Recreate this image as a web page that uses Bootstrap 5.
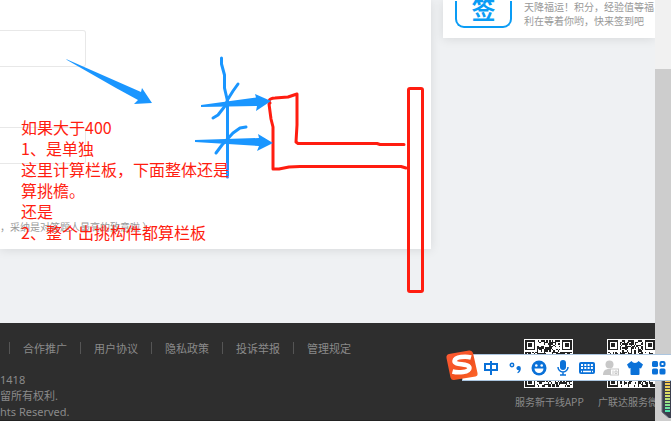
<!DOCTYPE html>
<html lang="zh-CN">
<head>
<meta charset="utf-8">
<meta name="viewport" content="width=device-width, initial-scale=1">
<title>服务新干线</title>
<link href="https://cdn.jsdelivr.net/npm/bootstrap@5.3.0/dist/css/bootstrap.min.css" rel="stylesheet">
<style>
  body { font-family: "Noto Sans", "Noto Sans CJK SC", sans-serif; background: #eff1f3; font-size: 12px; }
  .page-pane { min-width: 0; }
  .scroll-track { width: 16px; background: #f1f1f1; padding-top: 69px; }
  .scroll-thumb { background: #cdcdcd; }
  .panel { background: #fff; box-shadow: 0 1px 10px rgba(0,0,0,.1); }
  .columns { gap: 12px; padding-bottom: 74px; }
  .answer-panel { padding: 30px 0 14px; }
  .field { width: 86px; height: 37px; border: 1px solid #e8e8e8; border-left: 0; border-radius: 0 3px 3px 0; outline: 0; }
  .field + .field { margin-top: 60px; }
  .hint { font-size: 10px; line-height: 16px; color: #999; margin-top: 55px; font-family: "Noto Sans CJK SC", sans-serif; }
  .side-col { width: 212px; }
  .sign-card { gap: 12px; padding: 0 0 10px 12px; }
  .sign-box { width: 57px; height: 27px; border: 2px solid #0a9cf5; border-top: 0; border-radius: 0 0 9px 9px; background: #fff; color: #0a9cf5; font: 700 24px/24px "Noto Sans CJK SC", sans-serif; padding: 0 0 5px; }
  .sign-text { font: 10px/14px "Noto Sans CJK SC", sans-serif; color: #999; width: 132px; }
  .site-footer { background: #2e2e2e; color: #8a8a8a; border-bottom: 1px solid #222; }
  .foot-links { font: 11px/16px "Noto Sans CJK SC", sans-serif; padding: 19px 0 18px 9px; }
  .foot-links a { color: #8a8a8a; text-decoration: none; border-left: 1px solid #555; padding: 0 13px; line-height: 12px; white-space: nowrap; }
  .legal { font-size: 11px; line-height: 16px; }
  .qr-list { gap: 16px; padding: 16px 0 0; width: 140px; }
  .qr-item { width: 67px; font: 10px/16px "Noto Sans CJK SC", sans-serif; white-space: nowrap; }
  .qr-item svg { width: 49px; height: 49px; background: #fff; margin-bottom: 6px; }
  .drawing { left: 0; top: 0; pointer-events: none; }
  .note { left: 21px; top: 117px; color: #ff1d10; font: 16px/21px "Noto Sans CJK SC", sans-serif; width: 210px; }
  .ime { right: 0; top: 354px; height: 27px; background: #fff; border: 1px solid #abc5df; border-right: 0; padding-left: 16px; }
  .ime button { width: 24px; height: 25px; border: 0; padding: 0; background: none; color: #0a71d8; }
  .ime svg { display: block; margin: auto; }
  .ime-logo { left: 445px; top: 348px; }
  .meter { right: 0; top: 380px; }
</style>
<script src="https://cdn.jsdelivr.net/npm/bootstrap@5.3.0/dist/js/bootstrap.bundle.min.js"></script>
</head>
<body class="position-relative min-vh-100 overflow-hidden">
<div class="d-flex min-vh-100">
  <div class="page-pane d-flex flex-column flex-grow-1 overflow-hidden">
    <main class="columns d-flex align-items-start">
      <section class="panel answer-panel flex-grow-1">
        <input class="field d-block" aria-label="标题">
        <input class="field d-block" aria-label="悬赏">
        <p class="hint mb-0">，采纳是对答题人最高的致意啦 ）</p>
      </section>
      <aside class="side-col flex-shrink-0">
        <div class="panel sign-card d-flex align-items-end">
          <button class="sign-box flex-shrink-0 d-flex align-items-end justify-content-center" type="button">签</button>
          <p class="sign-text mb-0">天降福运！积分，经验值等福利在等着你哟，快来签到吧</p>
        </div>
      </aside>
    </main>
    <footer class="site-footer flex-grow-1 d-flex justify-content-between">
      <div>
        <nav class="foot-links d-flex align-items-center" aria-label="页脚">
          <a href="#">合作推广</a><a href="#">用户协议</a><a href="#">隐私政策</a><a href="#">投诉举报</a><a href="#">管理规定</a>
        </nav>
        <div class="legal">1418<br>留所有权利.<br>hts Reserved.</div>
      </div>
      <div class="qr-list d-flex flex-shrink-0">
        <div class="qr-item flex-shrink-0 text-center"><svg class="qr" data-seed="17" viewBox="-1 -1 35 35" shape-rendering="crispEdges"></svg><div>服务新干线APP</div></div>
        <div class="qr-item flex-shrink-0 text-center"><svg class="qr" data-seed="91" viewBox="-1 -1 35 35" shape-rendering="crispEdges"></svg><div>广联达服务微信</div></div>
      </div>
    </footer>
  </div>
  <div class="scroll-track d-flex flex-shrink-0"><div class="scroll-thumb w-100"></div></div>
</div>

<svg class="drawing position-absolute" width="440" height="300" viewBox="0 0 440 300" fill="none" stroke-linecap="round" stroke-linejoin="round" aria-hidden="true">
  <g stroke="#ff1d10" stroke-width="3">
    <path d="M270 103C267 99 273 98 275 98L288 97L297 94V125L296 142L298 143.500H377L380 144.500H404"/>
    <path d="M269 104L271 119L273 127V169H279L289 167L300 166.500H401L406 168"/>
    <rect x="408.500" y="88.500" width="14" height="203" rx="1.500"/>
  </g>
  <g stroke="#1a96ff" stroke-width="3">
    <path d="M221.500 58V64L224.500 75V88L227.500 101V177"/>
    <path d="M238 84L233 91L228 99L225 106L218 115L213 118"/>
    <path d="M246 127L240 128L233 133L222 145L216 153"/>
  </g>
  <g fill="#1a96ff">
    <path d="M66 59L141 92L142 88L152 103L134 104L138 100L116 88L67 60Z"/>
    <path d="M201 105L256 97.500L255 94L271 101L256 111L257 106L201 107Z"/>
    <path d="M195 140L259 138L258 134L273 143L257 151L259 146L195 142Z"/>
  </g>
</svg>
<div class="note position-absolute">如果大于400<br>1、是单独<br>这里计算栏板，下面整体还是算挑檐。<br>还是<br>2、整个出挑构件都算栏板</div>

<svg class="meter position-absolute" width="10" height="38" viewBox="0 0 10 38" aria-hidden="true">
  <defs><linearGradient id="lv" x1="0" y1="0" x2="0" y2="1"><stop stop-color="#ffc24a"/><stop offset=".5" stop-color="#d3e26b"/><stop offset="1" stop-color="#4be3b0"/></linearGradient></defs>
  <path d="M1 0H10V38H8L1 32Z" fill="#3b3f4e"/>
  <path d="M1 0V32L8 38" fill="none" stroke="#6a6e7c"/>
  <path d="M4 0h5v2h-5zM4 3h5v2h-5zM4 6h5v2h-5zM4 9h5v2h-5zM4 12h5v2h-5zM4 15h5v2h-5zM4 18h5v2h-5zM4 21h5v2h-5zM4 24h5v2h-5zM4 27h5v2h-5zM4 30h5v2h-5z" fill="url(#lv)"/>
</svg>
<div class="ime position-absolute d-flex align-items-center" role="toolbar" aria-label="输入法">
  <button type="button" aria-label="中文"><svg width="16" height="16" viewBox="0 0 16 16" fill="none" stroke="currentColor" stroke-width="2"><path d="M2 4H14V10H2ZM8 1V15"/></svg></button>
  <button type="button" aria-label="标点"><svg width="16" height="16" viewBox="0 0 16 16"><circle cx="5" cy="5" r="1.700" fill="none" stroke="currentColor" stroke-width="1.500"/><path d="M9.500 7.500a2.200 2.200 0 0 1 4.300 .5c.2 2.500-1 4.400-3 5.200l-.5-.8c1-.7 1.500-1.500 1.500-2.400A2 2 0 0 1 9.500 7.500" fill="currentColor"/></svg></button>
  <button type="button" aria-label="表情"><svg width="16" height="16" viewBox="0 0 16 16"><circle cx="8" cy="8" r="7.500" fill="currentColor"/><circle cx="5.300" cy="5.500" r="1.300" fill="#fff"/><circle cx="10.700" cy="5.500" r="1.300" fill="#fff"/><path d="M3.500 8.500h9a4.500 4.500 0 0 1-9 0" fill="#fff"/></svg></button>
  <button type="button" aria-label="语音"><svg width="16" height="16" viewBox="0 0 16 16"><rect x="5" y="0" width="6" height="10" rx="3" fill="currentColor"/><path d="M3 7a5 5 0 0 0 10 0M8 12v3M5 15h6" fill="none" stroke="currentColor" stroke-width="1.500"/></svg></button>
  <button type="button" aria-label="键盘"><svg width="16" height="16" viewBox="0 0 16 16"><rect x="0" y="2" width="16" height="12" rx="2" fill="currentColor"/><path d="M2 5h12M2 8h12" stroke="#fff" stroke-width="2" stroke-dasharray="2 1.300"/><path d="M4 11.500h8M2 11.500h1M13 11.500h1" stroke="#fff" stroke-width="1.500"/></svg></button>
  <button type="button" aria-label="账户"><svg width="16" height="16" viewBox="0 0 16 16"><g fill="#c8c8c8"><circle cx="6.500" cy="4.500" r="4"/><path d="M0 15c0-4 2-6 6-6h9v6z"/></g><rect x="7.500" y="9" width="8" height="6" fill="#fff" stroke="#c8c8c8"/><path d="M10 10.500V14M12 11h2v2.500h-2z" fill="none" stroke="#c8c8c8"/></svg></button>
  <button type="button" aria-label="皮肤"><svg width="16" height="16" viewBox="0 0 16 16"><path d="M4.500 1C6 3.500 10 3.500 11.500 1L16 4.500L14 8.500L12.500 8V14q0 1-1 1H4.500q-1 0-1-1V8L2 8.500L0 4.500Z" fill="currentColor"/></svg></button>
  <button type="button" aria-label="工具箱"><svg width="14" height="14" viewBox="0 0 14 14"><g fill="currentColor"><rect width="6" height="6" rx="1.500"/><rect y="7.500" width="6" height="6" rx="1.500"/><rect x="7.500" y="7.500" width="6" height="6" rx="1.500"/></g><rect x="8.500" y="1" width="4" height="4" rx="1" fill="none" stroke="currentColor" stroke-width="2"/></svg></button>
</div>
<svg class="ime-logo position-absolute" width="34" height="34" viewBox="0 0 34 34" aria-hidden="true">
  <defs><linearGradient id="sg" x1="0" y1="0" x2="1" y2="1"><stop stop-color="#ff5c36"/><stop offset=".6" stop-color="#f2511f"/><stop offset="1" stop-color="#ff6a2a"/></linearGradient></defs>
  <path d="M4 6L24 2.500Q27 2 28 5L32.500 25Q33 28 30.500 28.500L9 32Q6.500 32.500 5.500 29.500L1.500 10Q1 6.800 4 6Z" fill="url(#sg)"/>
  <path d="M26 9.500C21 8 10 8.500 9.500 13C9 17.500 24.500 15 24.500 20C24.500 24.500 13 25 7.500 23.500" fill="none" stroke="#fff" stroke-width="4.500"/>
</svg>
<script>
  // Fill each code with three finder squares and seeded modules.
  document.querySelectorAll('.qr').forEach(function (svg) {
    var n = 33, s = +svg.dataset.seed, d = '';
    function corner(x, y) {
      return (x < 8 && y < 8) || (x > n - 9 && y < 8) || (x < 8 && y > n - 9);
    }
    for (var y = 0; y < n; y++) for (var x = 0; x < n; x++) {
      s = (s * 16807) % 2147483647;
      if (!corner(x, y) && (s >> 8) % 100 < 53) d += 'M' + x + ' ' + y + 'h1v1h-1z';
    }
    [[0, 0], [n - 7, 0], [0, n - 7]].forEach(function (p) {
      d += 'M' + p[0] + ' ' + p[1] + 'h7v7h-7zm1 1v5h5v-5zm1 1h3v3h-3z';
    });
    var path = document.createElementNS('http://www.w3.org/2000/svg', 'path');
    path.setAttribute('d', d);
    path.setAttribute('fill', '#222');
    path.setAttribute('fill-rule', 'evenodd');
    svg.appendChild(path);
  });
</script>
</body>
</html>
